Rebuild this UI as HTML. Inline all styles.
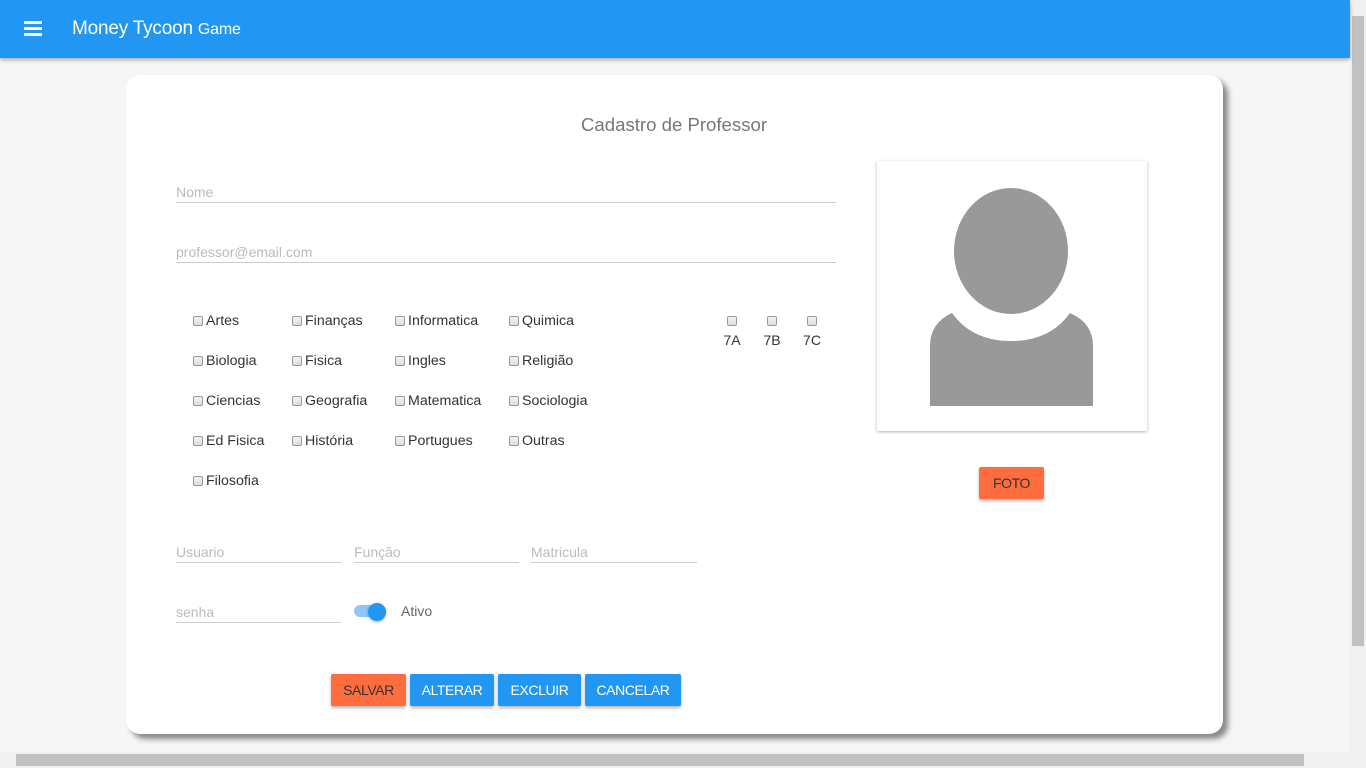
<!DOCTYPE html>
<html><head><meta charset="utf-8"><style>
*{box-sizing:border-box;margin:0;padding:0}
body{width:1366px;height:768px;overflow:hidden;background:#f6f6f6;font-family:"Liberation Sans",Arial,sans-serif;position:relative}
.hdr{position:absolute;left:0;top:0;width:1350px;height:58px;background:#2196F3;box-shadow:0 2px 4px rgba(0,0,0,.3);z-index:2}
.hdr .t{position:absolute;left:72px;top:18px;color:#fff;font-size:19px;letter-spacing:-0.2px}
.hdr .t small{font-size:16px}
.burger{position:absolute;left:24px;top:21px;width:18px}
.burger i{display:block;height:2.5px;background:#fff;margin-bottom:3.5px}
.card{position:absolute;left:126px;top:75px;width:1097px;height:659px;background:#fff;border-radius:14px;box-shadow:5px 5px 6px rgba(0,0,0,.45)}
.abs{position:absolute}
.title{left:581px;top:114px;font-size:18.6px;color:#777}
.inp{position:absolute;border-bottom:1px solid #ccc;color:#bbb;font-size:14px;padding-bottom:2px}
.cb{position:absolute;font-size:14.2px;color:#333;display:flex;align-items:center}
.cb i{display:inline-block;width:10px;height:10px;border:1px solid #999;border-radius:2px;background:linear-gradient(#f4f4f4,#ddd);margin-right:3px}
.cls{position:absolute;font-size:14px;color:#333;text-align:center;width:20px}
.cls i{display:block;width:10px;height:10px;border:1px solid #999;border-radius:2px;background:linear-gradient(#f4f4f4,#ddd);margin:0 auto 6px}
.btn{position:absolute;top:674px;height:32px;color:#fff;font-size:14px;display:flex;align-items:center;justify-content:center;border-radius:2px;box-shadow:0 2px 3px rgba(0,0,0,.3);background:#2196F3;letter-spacing:-0.4px}
.or{background:#FF6D3F;color:#333}
.vs{position:absolute;right:0;top:0;width:16px;height:768px;background:#f0f0f0}
.vs b{position:absolute;left:2px;top:16px;width:12px;height:630px;background:#c1c1c1}
.hs{position:absolute;left:0;bottom:0;width:1350px;height:16px;background:#f0f0f0}
.hs b{position:absolute;left:16px;top:2px;width:1288px;height:12px;background:#c1c1c1}
</style></head><body>
<div class="hdr"><div class="burger"><i></i><i></i><i></i></div><div class="t">Money Tycoon <small>Game</small></div></div>
<div class="card"></div>
<div class="abs title">Cadastro de Professor</div>
<div class="inp" style="left:176px;top:184px;width:660px">Nome</div>
<div class="inp" style="left:176px;top:244px;width:660px">professor@email.com</div>

<div class="cb" style="left:193px;top:313px"><i></i>Artes</div>
<div class="cb" style="left:292px;top:313px"><i></i>Finanças</div>
<div class="cb" style="left:395px;top:313px"><i></i>Informatica</div>
<div class="cb" style="left:509px;top:313px"><i></i>Quimica</div>
<div class="cb" style="left:193px;top:353px"><i></i>Biologia</div>
<div class="cb" style="left:292px;top:353px"><i></i>Fisica</div>
<div class="cb" style="left:395px;top:353px"><i></i>Ingles</div>
<div class="cb" style="left:509px;top:353px"><i></i>Religião</div>
<div class="cb" style="left:193px;top:393px"><i></i>Ciencias</div>
<div class="cb" style="left:292px;top:393px"><i></i>Geografia</div>
<div class="cb" style="left:395px;top:393px"><i></i>Matematica</div>
<div class="cb" style="left:509px;top:393px"><i></i>Sociologia</div>
<div class="cb" style="left:193px;top:433px"><i></i>Ed Fisica</div>
<div class="cb" style="left:292px;top:433px"><i></i>História</div>
<div class="cb" style="left:395px;top:433px"><i></i>Portugues</div>
<div class="cb" style="left:509px;top:433px"><i></i>Outras</div>
<div class="cb" style="left:193px;top:473px"><i></i>Filosofia</div>

<div class="cls" style="left:722px;top:316px"><i></i>7A</div>
<div class="cls" style="left:762px;top:316px"><i></i>7B</div>
<div class="cls" style="left:802px;top:316px"><i></i>7C</div>

<div class="abs" style="left:877px;top:161px;width:270px;height:270px;background:#fff;box-shadow:0 1px 3px rgba(0,0,0,.3)">
<svg width="270" height="270"><ellipse cx="134" cy="90" rx="57" ry="63" fill="#999"/><path d="M53 245 V185 Q53 162 75 152 Q95 180 134 180 Q173 180 193 152 Q216 162 216 185 V245Z" fill="#999"/></svg></div>
<div class="btn or" style="left:979px;top:467px;width:65px">FOTO</div>

<div class="inp" style="left:176px;top:544px;width:165px">Usuario</div>
<div class="inp" style="left:354px;top:544px;width:165px">Função</div>
<div class="inp" style="left:531px;top:544px;width:166px">Matricula</div>
<div class="inp" style="left:176px;top:604px;width:165px">senha</div>
<div class="abs" style="left:354px;top:605px;width:32px;height:12px;border-radius:6px;background:#8ec7f8"></div>
<div class="abs" style="left:368px;top:603px;width:18px;height:18px;border-radius:50%;background:#2196F3;box-shadow:0 1px 3px rgba(0,0,0,.3)"></div>
<div class="abs" style="left:401px;top:603px;font-size:14px;color:#666">Ativo</div>

<div class="btn or" style="left:331px;width:75px">SALVAR</div>
<div class="btn" style="left:410px;width:84px">ALTERAR</div>
<div class="btn" style="left:498px;width:83px">EXCLUIR</div>
<div class="btn" style="left:585px;width:96px">CANCELAR</div>

<div class="vs"><b></b></div>
<div class="hs"><b></b></div>
</body></html>
